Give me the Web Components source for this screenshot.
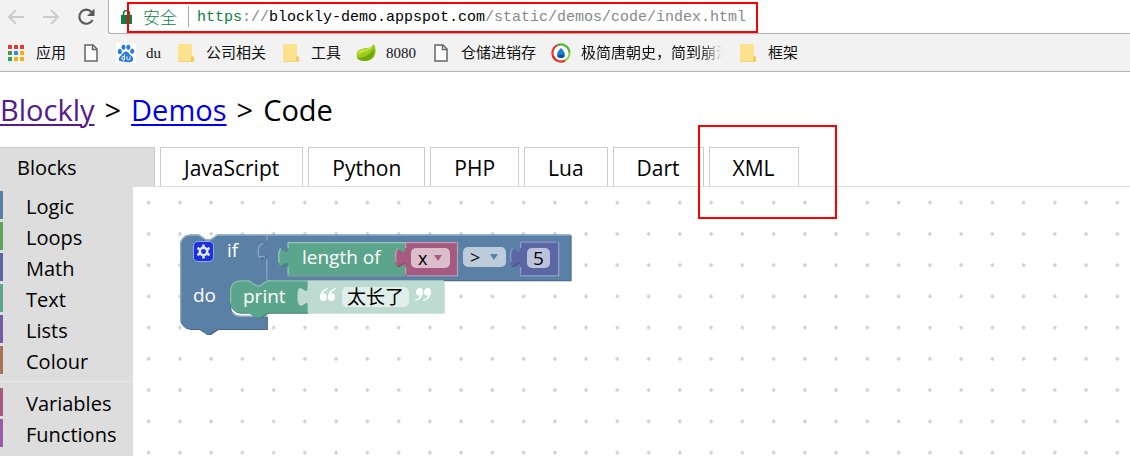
<!DOCTYPE html>
<html lang="en">
<head>
<meta charset="utf-8">
<title>Blockly Demo: Code</title>
<style>
html, body { margin: 0; height: 100%; }
body { background: #fff; color: #000; font-family: "Open Sans", "Noto Sans", "Noto Sans CJK SC", sans-serif; overflow: hidden; }
</style>
</head>
<body>
<code-app></code-app>
<script>
const define = (name, markup, ready) => {
  const template = document.createElement('template');
  template.innerHTML = markup;
  customElements.define(name, class extends HTMLElement {
    constructor() {
      super();
      this.attachShadow({ mode: 'open' }).append(template.content.cloneNode(true));
    }
    connectedCallback() { if (ready) ready(this, this.shadowRoot); }
  });
};

/* Bookmark bar icons */
const icons = {
  apps: `<svg viewBox="0 0 20 20"><g><path fill="#e53935" d="M2 2h4v4H2zM8 2h4v4H8zM14 2h4v4h-4z"/><path fill="#34a050" d="M2 8h4v4H2zM2 14h4v4H2z"/><path fill="#2f8de4" d="M8 8h4v4H8z" /><path fill="#f5ad0b" d="M14 8h4v4h-4zM8 14h4v4H8zM14 14h4v4h-4z"/></g></svg>`,
  page: `<svg viewBox="0 0 20 20"><path d="M4 2h8l4 4v12H4z" fill="#fbfbfb" stroke="#666" stroke-width="1.5"/><path d="M11.500 2v4.500H16" fill="none" stroke="#666" stroke-width="1.500"/></svg>`,
  folder: `<svg viewBox="0 0 20 20"><path d="M3 1h12q1 0 1 1v11l2 1v4q0 1-1 1H3q-1 0-1-1V2q0-1 1-1z" fill="#fde28e"/><path d="M16 13l2 1v4q0 1-1 1h-2v-4q0-1 1-2z" fill="#f3cb58"/><path d="M2.500 18.500h15" stroke="#f2d27a"/></svg>`,
  paw: `<svg viewBox="0 0 20 20"><path fill="#fff" d="M0 0h20v20H0z"/><g fill="#2b7de0"><ellipse cx="3.800" cy="8.500" rx="2" ry="2.800"/><ellipse cx="7.500" cy="4.200" rx="2" ry="2.700"/><ellipse cx="12.300" cy="4.200" rx="2" ry="2.700"/><ellipse cx="16.200" cy="8.300" rx="2" ry="2.700"/><path d="M10 8.500c2.500 0 3 2.500 5 4s2.500 2.500 2 4.500-2.500 2.500-7 2-6.500 0-7-2 .500-3 2-4.500 2.500-4 5-4z"/></g><path d="M8.500 11.500v5.500M8.500 14q-2.500-1.500-2.700 1t2.700 2M11 13.500v2q0 1.500 1.500 1.500t1.500-1.500v-2" fill="none" stroke="#fff"/></svg>`,
  leaf: `<svg viewBox="0 0 20 20"><path d="M1 15C-1 7 5 6 10 5c5 0 6-2 8-4 3 6 2 14-4 16-5 2-10 1-13-2z" fill="#9ccb19"/><path d="M1 15c7 0 13-3 17-10 1 6-1 10-5 12-5 2-9 1-12-2z" fill="#6ea80a"/><path d="M3 8c4-2 10-1 14-6-2 6-10 7-15 10z" fill="#c5e34b"/></svg>`,
  swirl: `<svg viewBox="0 0 20 20"><circle cx="10" cy="10" r="10" fill="#fff"/><g fill="none" stroke-width="2.200"><path d="M4 16A8.500 8.500 0 0 1 9 1.500" stroke="#e7352c"/><path d="M6 2.500A8.500 8.500 0 0 1 18.500 10" stroke="#55b63b"/><path d="M18.500 9A8.500 8.500 0 0 1 11 18.500" stroke="#9bd04d"/><path d="M14 17.500A8.500 8.500 0 0 1 2 13" stroke="#e7352c"/></g><path d="M10 5c2 2 4 4 4 7q-1 3-4 3t-4-3c0-3 2-5 4-7z" fill="#1b7fc9"/><path d="M6 13q4-3 8 0-1 2-4 2t-4-2z" fill="#0d4f98"/></svg>`
};

define('bookmark-item', `
<style>
:host { display: block; flex: none; }
a { display: flex; align-items: center; gap: 10px; color: #111; text-decoration: none; font: 15px/20px "Liberation Serif", "Noto Sans CJK SC", serif; white-space: nowrap; }
.icon { width: 20px; height: 20px; flex: none; }
.icon svg { display: block; }
:host([fade]) .label { width: 142px; overflow: hidden; -webkit-mask-image: linear-gradient(to right, #000 84%, transparent); mask-image: linear-gradient(to right, #000 84%, transparent); }
:host([plain]) .label { display: none; }
</style>
<a href="#"><span class="icon"></span><span class="label"><slot></slot></span></a>`,
(host, root) => {
  root.querySelector('.icon').innerHTML = icons[host.getAttribute('icon')];
  if (host.hasAttribute('plain')) root.querySelector('a').setAttribute('aria-label', 'Page');
});

define('browser-bar', `
<style>
:host { display: block; background: #f2f2f2; border-bottom: 1px solid #b4b4b4; }
.nav { display: flex; height: 34px; align-items: stretch; }
.buttons { display: flex; align-items: center; width: 91px; gap: 15px; padding: 0 11px 0 6px; }
button { border: 0; padding: 0; background: none; width: 20px; height: 20px; }
svg { display: block; }
.omnibox { flex: 1; min-width: 0; display: flex; align-items: center; background: #fff; border: solid #b0b0b0; border-width: 0 0 1px 1px; border-radius: 0 0 0 3px; padding-left: 12px; white-space: nowrap; overflow: hidden; }
.secure { color: #0b8043; font: 17px/24px "Noto Sans CJK SC", sans-serif; font-weight: 300; margin-left: 11px; padding-right: 11px; }
.url { border-left: 1px solid #aaa; padding: 3px 0 0 8px; line-height: 18px; font-size: 15px; font-family: "Liberation Mono", monospace; color: #888; outline: 0; }
.scheme { color: #0b8043; }
.host { color: #000; }
.marks { display: flex; gap: 15px; align-items: center; padding: 0 6px; height: 37px; }
</style>
<div class="nav">
  <div class="buttons">
    <button aria-label="Back"><svg width="20" height="20" viewBox="0 0 20 20"><path d="M18 10H3M10 3l-7 7 7 7" fill="none" stroke="#ccc" stroke-width="2"/></svg></button>
    <button aria-label="Forward"><svg width="20" height="20" viewBox="0 0 20 20"><path d="M2 10h15M10 3l7 7-7 7" fill="none" stroke="#ccc" stroke-width="2"/></svg></button>
    <button aria-label="Reload"><svg width="20" height="20" viewBox="0 0 20 20"><path d="M16.500 13A7 7 0 1 1 15.500 5" fill="none" stroke="#595959" stroke-width="2.200"/><path d="M18.500 1.500V9H11z" fill="#595959"/></svg></button>
  </div>
  <div class="omnibox">
    <svg width="11" height="14" viewBox="0 0 11 14"><path d="M0 5h11v9H0z" fill="#0b8043"/><path d="M2.500 6V3.500a3 3 0 0 1 6 0V6" fill="none" stroke="#0b8043" stroke-width="1.600"/></svg>
    <span class="secure">安全</span>
    <div class="url" role="textbox" aria-label="Address"><span class="scheme">https</span>://<span class="host">blockly-demo.appspot.com</span>/static/demos/code/index.html</div>
  </div>
</div>
<nav class="marks">
  <bookmark-item icon="apps">应用</bookmark-item>
  <bookmark-item icon="page" plain></bookmark-item>
  <bookmark-item icon="paw">du</bookmark-item>
  <bookmark-item icon="folder">公司相关</bookmark-item>
  <bookmark-item icon="folder">工具</bookmark-item>
  <bookmark-item icon="leaf">8080</bookmark-item>
  <bookmark-item icon="page">仓储进销存</bookmark-item>
  <bookmark-item icon="swirl" fade>极简唐朝史，简到崩溃</bookmark-item>
  <bookmark-item icon="folder">框架</bookmark-item>
</nav>`);

define('page-title', `
<style>
:host { display: block; padding: 18px 0 17px; }
h1 { margin: 0; display: flex; gap: 10px; font-size: 29px; line-height: 40px; font-weight: 400; }
a { color: #00e; text-decoration-thickness: 2px; text-underline-offset: 3px; }
a.seen { color: #551a8b; }
</style>
<h1><a class="seen" href="#">Blockly</a> <span>&gt;</span> <a href="#">Demos</a> <span>&gt;</span> <span>Code</span></h1>`);

define('code-tab', `
<style>
:host { display: block; }
button { display: block; height: 39px; box-sizing: border-box; border: 1px solid #ccc; border-bottom: 0; background: #fff; padding: 0 23px; font: inherit; font-size: 21px; line-height: 40px; color: #000; }
:host([selected]) button { background: #ddd; width: 155px; text-align: left; padding-left: 17px; border-left: 0; font-size: 20px; }
</style>
<button role="tab"><slot></slot></button>`);

define('tab-bar', `
<style>
:host { display: flex; gap: 5px; border-bottom: 1px solid #ddd; }
</style>
<code-tab selected>Blocks</code-tab>
<code-tab>JavaScript</code-tab>
<code-tab>Python</code-tab>
<code-tab>PHP</code-tab>
<code-tab>Lua</code-tab>
<code-tab>Dart</code-tab>
<code-tab>XML</code-tab>`);

define('tool-category', `
<style>
:host { display: block; height: 28px; border-left: 3px solid var(--hue); padding-left: 23px; font-size: 20px; line-height: 32px; }
</style>
<slot></slot>`);

define('tool-box', `
<style>
:host { display: flex; flex-direction: column; gap: 3px; flex: none; width: 133px; box-sizing: border-box; background: #ddd; padding-top: 4px; }
hr { width: 100%; margin: 4px 0 3px; border: 0; border-top: 1px solid #e8e8e8; }
</style>
<tool-category style="--hue:#5b80a5">Logic</tool-category>
<tool-category style="--hue:#5ba55b">Loops</tool-category>
<tool-category style="--hue:#5b67a5">Math</tool-category>
<tool-category style="--hue:#5ba58c">Text</tool-category>
<tool-category style="--hue:#745ba5">Lists</tool-category>
<tool-category style="--hue:#a5745b">Colour</tool-category>
<hr>
<tool-category style="--hue:#a55b80">Variables</tool-category>
<tool-category style="--hue:#995ba5">Functions</tool-category>`);

define('field-select', `
<style>
:host { display: block; height: 20px; border-radius: 5px; }
select { appearance: none; display: block; width: 100%; height: 20px; border: 0; border-radius: 5px; margin: 0; padding: 0 7px; background: var(--tint); color: #000; font: inherit; font-size: 18px; line-height: 20px; }
i { position: absolute; right: 8px; top: 7px; border: solid transparent; border-width: 6px 4px 0; border-top-color: var(--hue); }
</style>
<select aria-label="Option"><option></option></select><i></i>`,
(host, root) => { root.querySelector('option').textContent = host.getAttribute('value'); });

define('field-input', `
<style>
:host { display: block; height: 20px; }
input { display: block; width: 100%; height: 20px; box-sizing: border-box; border: 0; border-radius: 5px; margin: 0; padding: 0; background: var(--tint); color: #000; text-align: center; font: inherit; font-size: 19px; line-height: 20px; }
</style>
<input aria-label="Value">`,
(host, root) => { root.querySelector('input').value = host.getAttribute('value'); });

/* A group of connected blocks; the drawing uses 1.25 px per block unit */
const shapes = {
  condition: 'M0 8A8 8 0 0 1 8 0H15l6 4h3l6-4H70V5c0 10-8-8-8 7.500s8-2.500 8 7.500V36.500H70l-6 4h-3l-6-4H48a8 8 0 0 0-8 8v12.500a8 8 0 0 0 8 8H69.500V75.500H30l-6 4h-3l-6-4H8a8 8 0 0 1-8-8z',
  compare: 'M70 0H312.500V36.500H70V20c0-10-8 8-8-7.500s8 2.500 8-7.500z',
  length: 'M86.500 6H180V32.500H86.500V26c0-10-8 8-8-7.500s8 2.500 8-7.500z',
  variable: 'M180 6H221.500V32.500H180V26c0-10-8 8-8-7.500s8 2.500 8-7.500z',
  number: 'M272 5.500H302.500V32.500H272V26c0-10-8 8-8-7.500s8 2.500 8-7.500z',
  print: 'M40 44.500a8 8 0 0 1 8-8H55l6 4h3l6-4H102V62.500H70l-6 4h-3l-6-4H48a8 8 0 0 1-8-8z',
  text: 'M102 36.500H211V62.500H102V57c0-10-8 8-8-7.500s8 2.500 8-7.500z'
};
const block = (name, fill, dark, light) =>
  `<g stroke-linejoin="round"><path d="${shapes[name]}" fill="${dark}" transform="translate(.8 .8)"/><path d="${shapes[name]}" fill="${fill}"/>${light}</g>`;
const shine = (d, colour) => `<path d="${d}" fill="none" stroke="${colour}" stroke-width="1"/>`;

define('block-stack', `
<style>
:host { display: block; width: 394px; height: 104px; }
svg { display: block; overflow: visible; }
span, field-select, field-input, button { position: absolute; }
span { color: #fff; font-size: 19px; line-height: 24px; white-space: nowrap; }
.if { left: 47px; top: 4px; }
.do { left: 13px; top: 49px; }
.len { left: 122px; top: 11px; }
.print { left: 63px; top: 50px; }
.x { left: 231px; top: 14px; width: 39px; }
.gt { left: 283px; top: 13px; width: 43px; }
.five { left: 347px; top: 14px; width: 23px; }
.str { left: 162px; top: 53px; width: 67px; }
button { left: 13px; top: 7px; width: 21px; height: 21px; border: 1px solid #91a9e8; border-radius: 5px; background: #1d2fdc; padding: 0; }
button svg { margin: auto; }
</style>
<svg width="394" height="104" viewBox="0 0 394 104"><g transform="translate(0 .5) scale(1.25)">
${block('condition', '#5b80a5', '#496684', shine('M.500 68V8A7.500 7.500 0 0 1 8 .500H15l6 4h3l6-4H69.500M42 62.500a8 8 0 0 0 6 3H69.500', '#8fabc6'))}
${block('compare', '#5b80a5', '#496684', shine('M70 .500H312M69.500 5V.500M69.500 20V36M68 18.500q-2-2-4 0-2-1-1.500-6t4-5', '#8fabc6'))}
${block('length', '#5ba58c', '#497f79', shine('M86.500 11V6.500H180M86.500 26v6M79.500 22q-1.500-7 1-11', '#95c9b8') + shine('M86 33H180', '#7fa59f'))}
${block('variable', '#a55b80', '#84496a', shine('M180.500 11V6.500H221M180.500 26v6M173 22q-1.500-7 1-11', '#cf9bb7') + shine('M181 33H222V6', '#a9a6c2'))}
${block('number', '#5b67a5', '#495284', shine('M272.500 11V6H302M272.500 26v6M265 22q-1.500-7 1-11', '#9299cb') + shine('M272 33H303V6', '#94abcb'))}
${block('print', '#5ba58c', '#49846f', shine('M40.500 55V44.500a7.500 7.500 0 0 1 7.500-7.500H55l6 4h3l6-4H102', '#8cc0ae'))}
${block('text', '#bddbd1', '#bddbd1', '')}
</g>
<g fill="#fff"><path d="M148 54c-5 1-8 5-8 9 0 3 1 4 3 4s4-1 4-4-2-4-4-3c0-2 2-4 5-5zM156 54c-5 1-8 5-8 9 0 3 1 4 3 4s4-1 4-4-2-4-4-3c0-2 2-4 5-5z"/><path transform="rotate(180 195.500 60.500)" d="M148 54c-5 1-8 5-8 9 0 3 1 4 3 4s4-1 4-4-2-4-4-3c0-2 2-4 5-5zM156 54c-5 1-8 5-8 9 0 3 1 4 3 4s4-1 4-4-2-4-4-3c0-2 2-4 5-5z"/></g>
</svg>
<button aria-label="Block settings"><svg width="15" height="15" viewBox="-7 -7 14 14"><circle r="3.500" fill="none" stroke="#dfe6f5" stroke-width="2.400"/><path d="M0-4v-2.500M0 4v2.500M3.500-2l2.200-1.300M-3.500 2l-2.200 1.300M3.500 2l2.200 1.300M-3.500-2l-2.200-1.300" stroke="#dfe6f5" stroke-width="2.400"/></svg></button>
<span class="if">if</span>
<span class="do">do</span>
<span class="len">length of</span>
<span class="print">print</span>
<field-select class="x" value="x" style="--tint:#dbbdcc;--hue:#a55b80"></field-select>
<field-select class="gt" value="&gt;" style="--tint:#bdccdb;--hue:#5b80a5"></field-select>
<field-input class="five" value="5" style="--tint:#bdc2db"></field-input>
<field-input class="str" value="太长了" style="--tint:#e1efea"></field-input>`);

define('block-workspace', `
<style>
:host { display: block; position: relative; flex: 1; min-width: 0; overflow: hidden; background: #fff; }
.dots { position: absolute; inset: 0; }
block-stack { position: absolute; left: 47px; top: 47px; }
</style>
<svg class="dots" width="100%" height="100%"><defs><pattern id="grid" width="25" height="25" patternUnits="userSpaceOnUse" patternTransform="scale(1.25)"><path d="M11 12.500h3M12.500 11v3" stroke="#ccc" stroke-width="1.200"/></pattern></defs><rect width="100%" height="100%" fill="url(#grid)"/></svg>
<block-stack></block-stack>`);

define('code-app', `
<style>
:host { display: flex; flex-direction: column; min-height: 100vh; position: relative; }
main { flex: 1; display: flex; }
.mark { position: absolute; box-sizing: border-box; border: 2px solid #f00; pointer-events: none; }
.address { left: 127px; top: 2px; width: 631px; height: 31px; }
.xml { left: 698px; top: 125px; width: 139px; height: 94px; }
</style>
<browser-bar></browser-bar>
<page-title></page-title>
<tab-bar></tab-bar>
<main><tool-box></tool-box><block-workspace></block-workspace></main>
<div class="mark address"></div>
<div class="mark xml"></div>`);
</script>
</body>
</html>
